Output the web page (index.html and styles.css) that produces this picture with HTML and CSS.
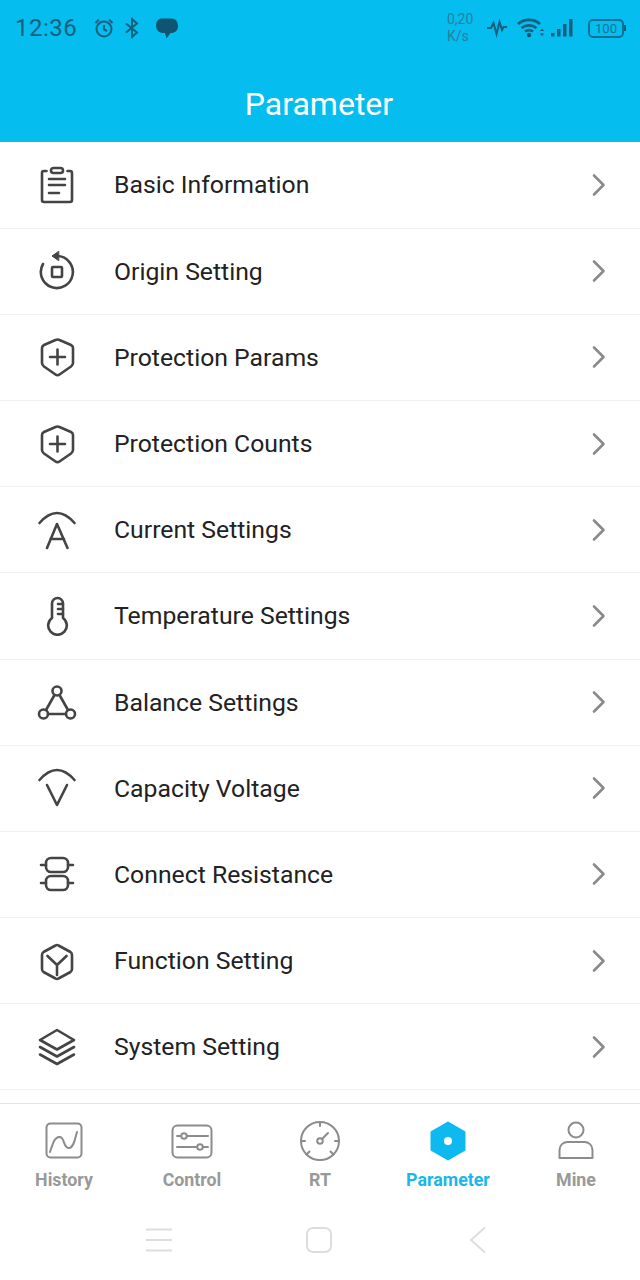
FILE: index.html
```html
<!DOCTYPE html>
<html lang="en">
<head>
    <meta charset="UTF-8">
    <meta name="viewport" content="width=device-width, initial-scale=1.0">
    <title>Parameter</title>
    <link rel="stylesheet" href="styles.css">
</head>
<body>
    <div class="app">
        <header class="header">
            <div class="status">
                <span class="time">12:36</span>
                <svg class="st-icon alarm" width="22" height="22" viewBox="0 0 22 22">
                    <circle cx="11" cy="12" r="7.500"/>
                    <path d="M11 8v4.500l3 1.500M2.500 6 6 2.500M19.500 6 16 2.500"/>
                </svg>
                <svg class="st-icon bt" width="18" height="22" viewBox="0 0 18 22">
                    <path d="M3 6.500 14 15.500 9 20V2l5 4.500L3 15.500"/>
                </svg>
                <svg class="st-icon chat" width="24" height="24" viewBox="0 0 24 24">
                    <path class="fill" d="M7.500 2.500h9c4 0 6.500 3 6.500 7.500s-3 7-7 7h-.5L11.500 22.500l-1.500-5.500H8c-4 0-7-3-7-7.500s2.500-7 6.500-7z"/>
                </svg>
                <span class="spacer"></span>
                <span class="speed">0,20<br>K/s</span>
                <svg class="st-icon pulse" width="22" height="20" viewBox="0 0 22 20">
                    <path d="M1 10h4l2.500-5 3 11 3-12 2.500 8 1.500-3H21"/>
                </svg>
                <svg class="st-icon wifi" width="27" height="22" viewBox="0 0 27 22">
                    <path d="M1 7C7 1.500 17 1.500 23 7M4.500 11c4.500-3.500 10.500-3.500 15 0M8 14.500c2.500-1.800 5.500-1.800 8 0"/>
                    <circle class="fill" cx="12" cy="18" r="2.200"/>
                    <path class="fill" d="M25 11.500 27 14h-4zM25 19l2-2.500h-4z"/>
                </svg>
                <svg class="bars" width="23" height="20" viewBox="0 0 23 20">
                    <rect x="0" y="15" width="3.500" height="3.500"/>
                    <rect x="6" y="11" width="3.500" height="7.500"/>
                    <rect x="12" y="6" width="3.500" height="12.500"/>
                    <rect x="18" y="1" width="3.500" height="17.500"/>
                </svg>
                <span class="battery"><span class="battery-num">100</span></span>
                <span class="battery-tip"></span>
            </div>
            <h1 class="title">Parameter</h1>
        </header>

        <div class="list">
            <div class="row">
                <svg class="row-icon" width="40" height="40" viewBox="0 0 40 40">
                    <path d="M9.500 6H7a2 2 0 0 0-2 2v27a2 2 0 0 0 2 2h26a2 2 0 0 0 2-2V8a2 2 0 0 0-2-2h-2.500"/>
                    <rect x="14" y="3" width="12" height="5" rx="2.500"/>
                    <path d="M12 14h16M12 20h16M12 28h10"/>
                </svg>
                <span class="row-label">Basic Information</span>
                <svg class="chevron" width="14" height="24" viewBox="0 0 14 24"><path d="M2 2.500 11.500 12 2 21.500"/></svg>
            </div>
            <div class="row">
                <svg class="row-icon" width="40" height="40" viewBox="0 0 40 40">
                    <path d="M20 5a16 16 0 1 1-14 8"/>
                    <path class="solid" d="M21.500 0.500 15 5l6.500 4.500z"/>
                    <rect x="15" y="16" width="10" height="10" rx="1"/>
                </svg>
                <span class="row-label">Origin Setting</span>
                <svg class="chevron" width="14" height="24" viewBox="0 0 14 24"><path d="M2 2.500 11.500 12 2 21.500"/></svg>
            </div>
            <div class="row">
                <svg class="row-icon" width="40" height="40" viewBox="0 0 40 40">
                    <path d="M18.500 3 7 8Q5 9 5 11V26Q5 28 7 29.500L18.500 37.500Q20.500 39 22.500 37.500L34 29.500Q36 28 36 26V11Q36 9 34 8L22.500 3Q20.500 2 18.500 3z"/>
                    <path d="M13 20h15M20.500 12.500v15"/>
                </svg>
                <span class="row-label">Protection Params</span>
                <svg class="chevron" width="14" height="24" viewBox="0 0 14 24"><path d="M2 2.500 11.500 12 2 21.500"/></svg>
            </div>
            <div class="row">
                <svg class="row-icon" width="40" height="40" viewBox="0 0 40 40">
                    <path d="M18.500 3 7 8Q5 9 5 11V26Q5 28 7 29.500L18.500 37.500Q20.500 39 22.500 37.500L34 29.500Q36 28 36 26V11Q36 9 34 8L22.500 3Q20.500 2 18.500 3z"/>
                    <path d="M13 20h15M20.500 12.500v15"/>
                </svg>
                <span class="row-label">Protection Counts</span>
                <svg class="chevron" width="14" height="24" viewBox="0 0 14 24"><path d="M2 2.500 11.500 12 2 21.500"/></svg>
            </div>
            <div class="row">
                <svg class="row-icon" width="40" height="40" viewBox="0 0 40 40">
                    <path d="M2.500 13Q20-7 37.500 13"/>
                    <path d="M10 38 20 14l10.500 24M13.500 29h13.500"/>
                </svg>
                <span class="row-label">Current Settings</span>
                <svg class="chevron" width="14" height="24" viewBox="0 0 14 24"><path d="M2 2.500 11.500 12 2 21.500"/></svg>
            </div>
            <div class="row">
                <svg class="row-icon" width="40" height="40" viewBox="0 0 40 40">
                    <path d="M15 22V7.500a5.500 5.500 0 0 1 11 0V22a9.300 9.300 0 1 1-11 0z"/>
                    <path d="M21 8h5M21 13h5M21 18h5"/>
                </svg>
                <span class="row-label">Temperature Settings</span>
                <svg class="chevron" width="14" height="24" viewBox="0 0 14 24"><path d="M2 2.500 11.500 12 2 21.500"/></svg>
            </div>
            <div class="row">
                <svg class="row-icon" width="40" height="40" viewBox="0 0 40 40">
                    <circle cx="20" cy="9" r="4.500"/>
                    <circle cx="6.500" cy="32" r="4.500"/>
                    <circle cx="33.500" cy="32" r="4.500"/>
                    <path d="M17.500 13 9 28M22.500 13 31 28M11 32h18"/>
                </svg>
                <span class="row-label">Balance Settings</span>
                <svg class="chevron" width="14" height="24" viewBox="0 0 14 24"><path d="M2 2.500 11.500 12 2 21.500"/></svg>
            </div>
            <div class="row">
                <svg class="row-icon" width="40" height="40" viewBox="0 0 40 40">
                    <path d="M2.500 12Q20-8 37.500 12"/>
                    <path d="M10 17 20 37l10-20"/>
                </svg>
                <span class="row-label">Capacity Voltage</span>
                <svg class="chevron" width="14" height="24" viewBox="0 0 14 24"><path d="M2 2.500 11.500 12 2 21.500"/></svg>
            </div>
            <div class="row">
                <svg class="row-icon" width="40" height="40" viewBox="0 0 40 40">
                    <rect x="9" y="4" width="22" height="14" rx="5"/>
                    <rect x="9" y="22" width="22" height="14" rx="5"/>
                    <path d="M4 11h5M31 11h5M4 29h5M31 29h5"/>
                </svg>
                <span class="row-label">Connect Resistance</span>
                <svg class="chevron" width="14" height="24" viewBox="0 0 14 24"><path d="M2 2.500 11.500 12 2 21.500"/></svg>
            </div>
            <div class="row">
                <svg class="row-icon" width="40" height="40" viewBox="0 0 40 40">
                    <path d="M18.500 4.500 6.500 11Q5 12 5 14V28Q5 30 6.500 31L18.500 37.500Q20 38.500 21.500 37.500L33.500 31Q35 30 35 28V14Q35 12 33.500 11L21.500 4.500Q20 3.500 18.500 4.500z"/>
                    <path d="M10.500 15 20 24l9.500-9M20 24v10"/>
                </svg>
                <span class="row-label">Function Setting</span>
                <svg class="chevron" width="14" height="24" viewBox="0 0 14 24"><path d="M2 2.500 11.500 12 2 21.500"/></svg>
            </div>
            <div class="row">
                <svg class="row-icon" width="40" height="40" viewBox="0 0 40 40">
                    <path d="M20 3 37 13 20 22.500 3 13z"/>
                    <path d="M3 20 20 29.500 37 20M3 27.500 20 37l17-9.500"/>
                </svg>
                <span class="row-label">System Setting</span>
                <svg class="chevron" width="14" height="24" viewBox="0 0 14 24"><path d="M2 2.500 11.500 12 2 21.500"/></svg>
            </div>
        </div>

        <nav class="tabs">
            <div class="tab">
                <svg width="44" height="40" viewBox="0 0 44 40">
                    <rect x="4.500" y="2.500" width="35" height="34" rx="4"/>
                    <path d="M8 31C11 22 13 15 18 16c5 1 3 11 9 11 5 0 6-10 8-16"/>
                </svg>
                <span>History</span>
            </div>
            <div class="tab">
                <svg width="44" height="40" viewBox="0 0 44 40">
                    <rect x="2.500" y="4.500" width="39" height="32" rx="5"/>
                    <path d="M7 15h4M17 15h21M7 26h20M33 26h5"/>
                    <circle cx="14" cy="15" r="2.800"/>
                    <circle cx="30" cy="26" r="2.800"/>
                </svg>
                <span>Control</span>
            </div>
            <div class="tab">
                <svg width="44" height="40" viewBox="0 0 44 40">
                    <circle cx="22" cy="20" r="19"/>
                    <circle cx="22" cy="20" r="2.800"/>
                    <path d="M24 18 30 12M22 1v4M3 20h4M37 20h4M8.500 33.500l3-3M35.500 33.500l-3-3"/>
                </svg>
                <span>RT</span>
            </div>
            <div class="tab active">
                <svg width="44" height="40" viewBox="0 0 44 40">
                    <path class="hex" d="M22 1.500 38.500 11v18L22 38.500 5.500 29V11z"/>
                    <circle class="dot" cx="22" cy="20" r="4"/>
                </svg>
                <span>Parameter</span>
            </div>
            <div class="tab">
                <svg width="44" height="40" viewBox="0 0 44 40">
                    <circle cx="22" cy="9" r="7.500"/>
                    <path d="M5.500 37V29c0-5 4-8 8-8h17c4 0 8 3 8 8v8z"/>
                </svg>
                <span>Mine</span>
            </div>
        </nav>

        <div class="sysnav">
            <svg width="28" height="26" viewBox="0 0 28 26">
                <path d="M1 2.500h26M1 13h26M1 23.500h26"/>
            </svg>
            <svg width="28" height="28" viewBox="0 0 28 28">
                <rect x="2" y="2" width="24" height="24" rx="6"/>
            </svg>
            <svg class="back" width="18" height="28" viewBox="0 0 18 28">
                <path d="M16 1.500 2 14l14 12.500"/>
            </svg>
        </div>
    </div>
</body>
</html>
```

FILE: styles.css
```css
* {
    box-sizing: border-box;
}
body {
    margin: 0;
    background-color: #ffffff;
    font-family: Roboto, Arial, sans-serif;
}
.app {
    display: flex;
    flex-direction: column;
    width: 640px;
    height: 1280px;
    overflow: hidden;
}

/* top blue area */
.header {
    display: flex;
    flex-direction: column;
    height: 142.4px;
    background-color: #05bdee;
}
.status {
    display: flex;
    align-items: center;
    height: 56px;
    padding: 0 14px 0 15px;
    color: #14607f;
}
.time {
    width: 78px;
    font-size: 24px;
    letter-spacing: 0.5px;
}
.st-icon {
    fill: none;
    stroke: #14607f;
    stroke-width: 2;
}
.st-icon .fill {
    fill: #0f5570;
    stroke: none;
}
.alarm {
    margin-right: 8px;
}
.bt {
    margin-right: 14px;
}
.wifi {
    stroke-width: 2.600;
    margin-right: 7px;
}
.spacer {
    flex: 1;
}
.speed {
    width: 39px;
    font-size: 14px;
    line-height: 17px;
    color: #2a7d9e;
}
.pulse {
    margin-right: 9px;
}
.bars {
    margin-right: 14px;
    fill: #14607f;
}
.battery {
    display: flex;
    align-items: center;
    justify-content: center;
    width: 36px;
    height: 19px;
    border: 2px solid #14607f;
    border-radius: 5px;
    opacity: 0.8;
}
.battery-num {
    font-size: 13px;
    color: #14607f;
}
.battery-tip {
    width: 2px;
    height: 6px;
    background-color: #14607f;
}
.title {
    margin: 28px 2px 0 0;
    text-align: center;
    font-size: 32px;
    line-height: 40px;
    font-weight: 400;
    color: #ffffff;
}

/* menu list */
.row {
    display: flex;
    align-items: center;
    height: 86.2px;
    padding: 0 34px 0 37px;
    border-bottom: 1px solid #f1f1f1;
}
.row-icon {
    flex: none;
    margin-right: 37px;
    fill: none;
    stroke: #444444;
    stroke-width: 2.600;
    stroke-linecap: round;
    stroke-linejoin: round;
}
.row-icon .solid {
    fill: #444444;
    stroke-width: 1;
}
.row-label {
    flex: 1;
    font-size: 24.75px;
    color: #222222;
}
.chevron {
    fill: none;
    stroke: #8a8a8a;
    stroke-width: 2.600;
    stroke-linecap: round;
    stroke-linejoin: round;
}

/* bottom tabs */
.tabs {
    display: flex;
    height: 102px;
    margin-top: auto;
    padding-top: 17px;
    border-top: 1px solid #e4e4e4;
}
.tab {
    display: flex;
    flex: 1;
    flex-direction: column;
    align-items: center;
    font-size: 17.8px;
    font-weight: 700;
    color: #999999;
}
.tab svg {
    margin-bottom: 8px;
    fill: none;
    stroke: #8c8c8c;
    stroke-width: 2;
    stroke-linecap: round;
    stroke-linejoin: round;
}
.tab.active {
    color: #1cb6e9;
}
.tab .hex {
    fill: #0db9ee;
    stroke: #0db9ee;
}
.tab .dot {
    fill: #ffffff;
    stroke: none;
}

/* android buttons */
.sysnav {
    display: flex;
    align-items: center;
    gap: 132px;
    height: 75px;
    padding: 0 0 6px 145px;
}
.sysnav svg {
    fill: none;
    stroke: #dddddd;
    stroke-width: 2;
}
.sysnav .back {
    margin-left: 4px;
}
```
